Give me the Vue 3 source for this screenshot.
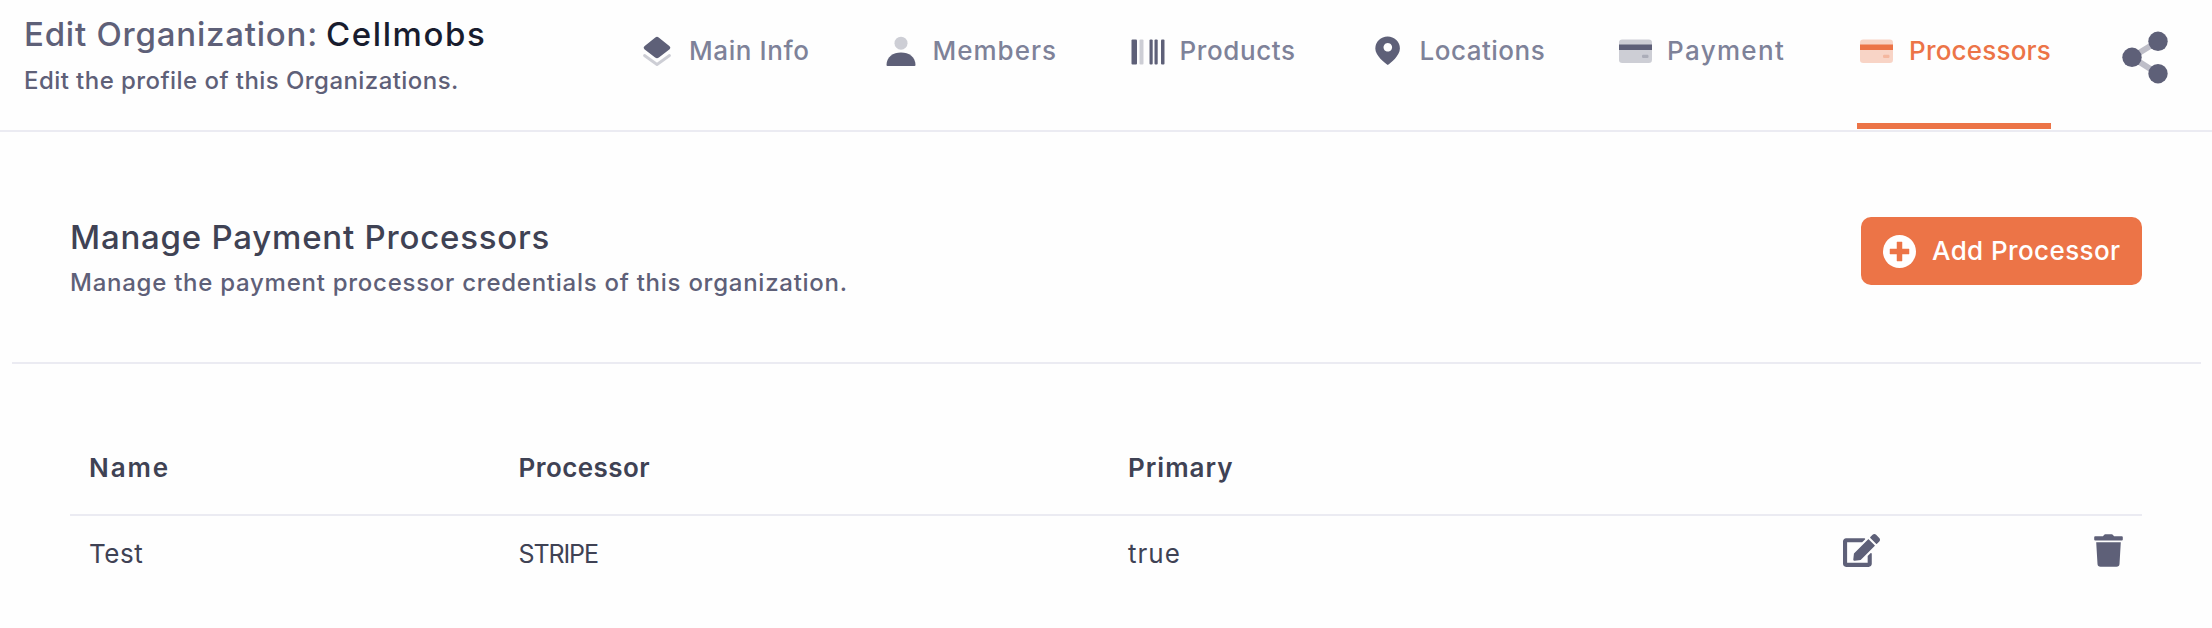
<script setup>
const tabs = [
  { key: 'info', label: 'Main Info' },
  { key: 'members', label: 'Members' },
  { key: 'products', label: 'Products' },
  { key: 'locations', label: 'Locations' },
  { key: 'payment', label: 'Payment' },
  { key: 'processors', label: 'Processors', active: true },
]
const rows = [{ name: 'Test', processor: 'STRIPE', primary: 'true' }]
</script>

<template>
  <div class="page">
    <header class="topbar">
      <div class="heading">
        <h1><span class="h-a">Edit Organization:</span><span class="h-b">Cellmobs</span></h1>
        <p>Edit the profile of this Organizations.</p>
      </div>
      <nav class="tabs">
        <a v-for="t in tabs" :key="t.key" class="tab" :class="[t.key, { active: t.active }]">
          <svg class="ico" viewBox="0 0 36 36" width="36" height="36">
            <g v-if="t.key === 'info'">
              <path d="M5.500 22.500 L18 31.500 L30.500 22.500" fill="none" stroke="currentColor" stroke-width="2.800" stroke-linecap="round" stroke-linejoin="round" opacity=".3" />
              <path d="M16.300 4.400 Q18 3.200 19.700 4.400 L30.600 13.200 Q32.200 14.700 30.600 16.200 L19.900 24.500 Q18 26 16.100 24.500 L5.400 16.200 Q3.800 14.700 5.400 13.200 Z" />
            </g>
            <g v-else-if="t.key === 'members'">
              <circle cx="18" cy="10.200" r="6.500" opacity=".3" />
              <path d="M3.500 32 C3.500 24 10 19.500 18 19.500 S32.500 24 32.500 32 Q32.500 33 31.500 33 H4.500 Q3.500 33 3.500 32Z" />
            </g>
            <g v-else-if="t.key === 'products'">
              <rect x="1.500" y="6.500" width="5.500" height="25" rx="1" />
              <rect x="9.500" y="6.500" width="4" height="25" rx="1" opacity=".3" />
              <rect x="19.500" y="6.500" width="3.200" height="25" rx="1" />
              <rect x="24.500" y="6.500" width="3.200" height="25" rx="1" />
              <rect x="31" y="6.500" width="3.500" height="25" rx="1" />
            </g>
            <path v-else-if="t.key === 'locations'" fill-rule="evenodd" d="M17.800 32 C14.800 30 5.300 22.500 5.300 15.500 A12.300 12 0 0 1 29.900 15.500 C29.900 22.500 20.800 30 17.800 32Z M17.800 10 a4.300 4.300 0 1 0 .01 0Z" />
            <g v-else>
              <rect x="2" y="6.500" width="33" height="23.500" rx="3.200" opacity=".3" />
              <rect x="2" y="11.500" width="33" height="5.500" />
              <rect x="25" y="21.700" width="6.500" height="3.300" rx="1.200" opacity=".3" />
            </g>
          </svg>
          <span>{{ t.label }}</span>
        </a>
      </nav>
      <svg class="share" viewBox="0 0 50 56" width="50" height="56">
        <path d="M38 11.300 L12 27.300 L38 43.700" fill="none" stroke="currentColor" stroke-width="6" opacity=".4" />
        <circle cx="38" cy="11.300" r="9.700" /><circle cx="12" cy="27.300" r="9.700" /><circle cx="38" cy="43.700" r="9.700" />
      </svg>
    </header>

    <section class="intro">
      <div>
        <h2>Manage Payment Processors</h2>
        <p>Manage the payment processor credentials of this organization.</p>
      </div>
      <button class="add">
        <svg viewBox="0 0 33 33" width="33" height="33">
          <circle cx="16.500" cy="16.500" r="16.500" fill="#fff" />
          <path d="M14 7 h5 v7 h7 v5 h-7 v7 h-5 v-7 h-7 v-5 h7z" fill="#ec7447" stroke="#ec7447" stroke-width=".5" stroke-linejoin="round" />
        </svg>
        <span>Add Processor</span>
      </button>
    </section>

    <div class="table">
      <div class="row head">
        <span class="c-name">Name</span><span class="c-proc">Processor</span><span class="c-prim">Primary</span>
      </div>
      <div v-for="r in rows" :key="r.name" class="row body">
        <span class="c-name">{{ r.name }}</span><span class="c-proc">{{ r.processor }}</span><span class="c-prim">{{ r.primary }}</span>
        <svg class="edit" viewBox="0 0 576 512" width="37" height="33">
          <path d="M402.600 83.200l90.200 90.200c3.800 3.800 3.800 10 0 13.800L274.400 405.600l-92.800 10.300c-12.400 1.400-22.900-9.100-21.500-21.500l10.300-92.800L388.800 83.200c3.800-3.800 10-3.800 13.800 0zm162-22.900l-48.800-48.800c-15.200-15.200-39.900-15.200-55.200 0l-35.400 35.400c-3.800 3.800-3.800 10 0 13.800l90.200 90.200c3.800 3.800 10 3.800 13.800 0l35.400-35.400c15.200-15.300 15.200-40 0-55.200zM384 346.200V448H64V128h229.800c3.200 0 6.200-1.300 8.500-3.500l40-40c7.600-7.600 2.200-20.500-8.500-20.500H48C21.500 64 0 85.500 0 112v352c0 26.500 21.500 48 48 48h352c26.500 0 48-21.500 48-48V306.200c0-10.700-12.900-16-20.500-8.500l-40 40c-2.200 2.300-3.500 5.300-3.500 8.500z" />
        </svg>
        <svg class="trash" viewBox="0 0 29 33" width="29" height="33">
          <path d="M1.200 2.200 H9 L10 .9 Q10.500 .3 11.300 .3 H17.700 Q18.500 .3 19 .9 L20 2.200 H27.800 Q28.800 2.200 28.800 3.200 V5.400 Q28.800 6.400 27.800 6.400 H1.200 Q.2 6.400 .2 5.400 V3.200 Q.2 2.200 1.200 2.200Z M2.200 8.300 H26.800 L25.500 30 Q25.300 32.800 22.500 32.800 H6.500 Q3.700 32.800 3.500 30Z" />
        </svg>
      </div>
    </div>
  </div>
</template>

<style>
body { background: #fefefe; }
</style>

<style scoped>
.page { width: 2212px; height: 628px; overflow: hidden; background: #fefefe; font-family: Inter, "Noto Sans", sans-serif; color: #3f4254; font-size: 26px; }
* { box-sizing: border-box; }
h1, h2, p { margin: 0; font-weight: 500; white-space: nowrap; }
svg { display: block; flex: none; fill: currentColor; }
.topbar { display: flex; height: 132px; border-bottom: 2px solid #ebebf2; color: #5e6078; }
.heading { width: 639px; padding: 13px 0 0 24px; }
h1 { display: flex; font-size: 33px; line-height: 42px; }
.h-a { width: 302px; letter-spacing: .78px; }
.h-b { color: #181c2e; letter-spacing: 1.6px; }
.heading p { margin-top: 10px; font-size: 24px; line-height: 32px; letter-spacing: .44px; }
.tabs { display: grid; grid-template-columns: 243.5px 247px 240px 247.5px 240px 194px; height: 129px; }
.tab { display: flex; align-items: flex-start; color: #5e6078; white-space: nowrap; font-weight: 500; }
.tab .ico { margin-top: 33px; }
.tab span { color: #7e8299; line-height: 34px; margin: 34px 0 0 14px; letter-spacing: .6px; }
.tab.members span { letter-spacing: 1px; }
.tab.locations span { letter-spacing: .5px; }
.tab.payment span { letter-spacing: 1.35px; }
.tab.processors span { margin-left: 15px; letter-spacing: .2px; }
.tab.active { border-bottom: 6px solid #ec7447; }
.tab.active, .tab.active span { color: #ec7447; }
.tab.active .ico { margin-left: 1px; }
.share { margin: 30px 0 0 69px; color: #5e6078; }
.intro { display: flex; justify-content: space-between; height: 232px; margin: 0 11px 0 12px; padding: 85px 59px 0 58px; border-bottom: 2px solid #ebebf2; }
h2 { font-size: 33px; line-height: 40px; letter-spacing: .78px; }
.intro p { color: #5e6078; font-size: 24px; line-height: 32px; margin-top: 10px; letter-spacing: .74px; }
.add { display: flex; align-items: center; width: 281px; height: 68px; padding: 0 0 0 22px; border: 0; border-radius: 10px; background: #ec7447; color: #fff; font: 500 26px Inter, sans-serif; white-space: nowrap; }
.add span { margin: 0 0 2px 16px; letter-spacing: .4px; }
.table { margin: 0 70px; }
.row { display: flex; padding-left: 19px; line-height: 34px; }
.head { height: 152px; padding-top: 87px; border-bottom: 2px solid #ebebf2; font-weight: 600; }
.body { padding-top: 21px; }
.c-name { width: 429.5px; }
.c-proc { width: 609.5px; }
.c-prim { width: 715px; }
.head .c-name { letter-spacing: 1.9px; }
.head .c-proc { letter-spacing: .45px; }
.head .c-prim { letter-spacing: 1px; }
.body .c-name { letter-spacing: .5px; }
.body .c-proc { font-size: 25px; letter-spacing: -1.1px; }
.body .c-prim { letter-spacing: 1px; }
.edit { margin-top: -3px; color: #5e6078; }
.trash { margin: -3px 0 0 214px; color: #5e6078; }
</style>
